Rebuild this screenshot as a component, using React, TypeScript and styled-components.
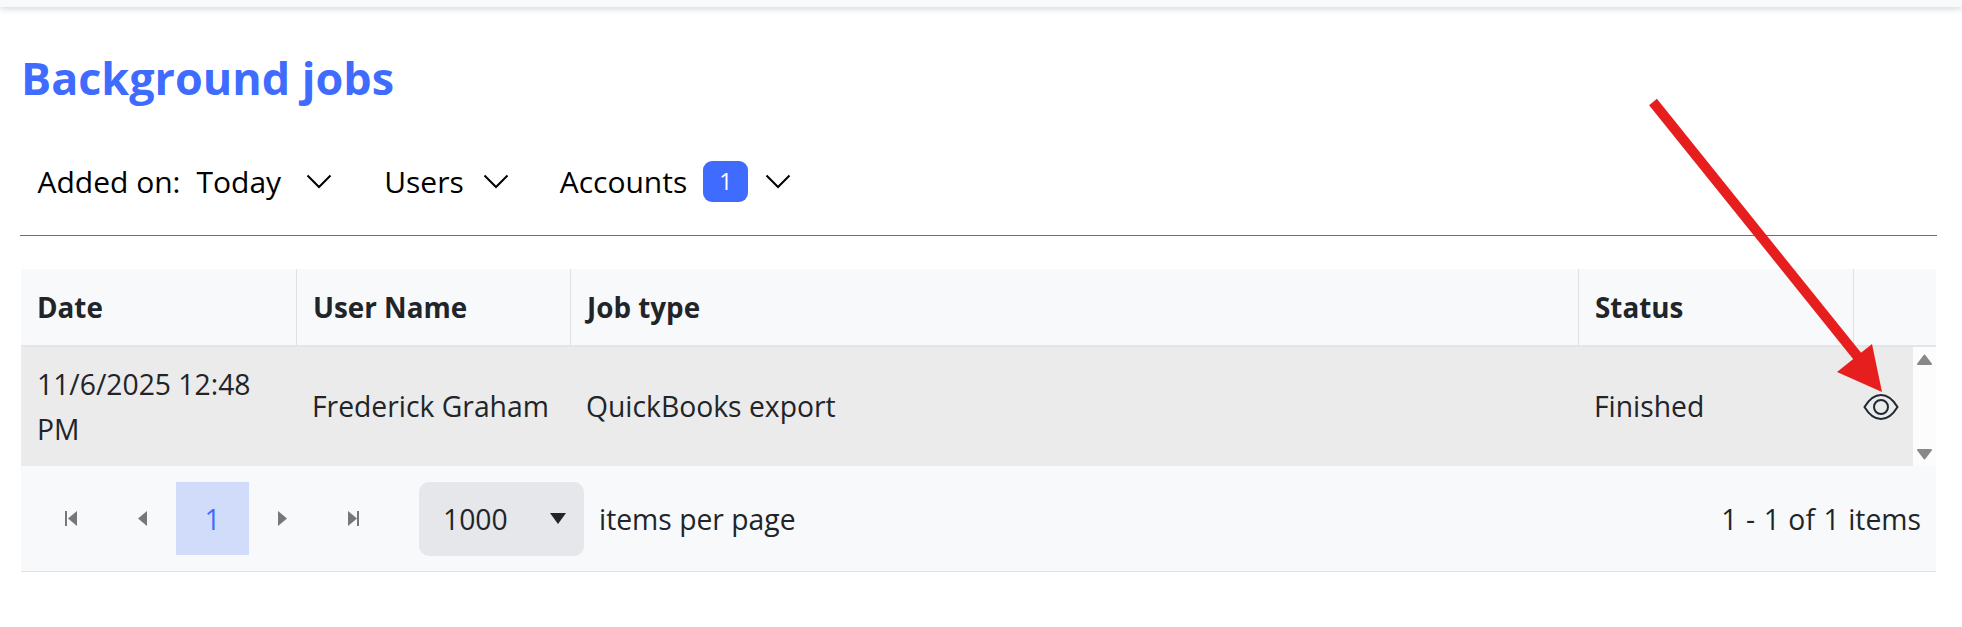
import React from 'react';
import styled, {createGlobalStyle} from 'styled-components';

const GlobalStyle = createGlobalStyle`
    html, body {
        margin: 0;
        padding: 0;
        background: #fff;
        font-family: "Open Sans", "Noto Sans", sans-serif;
        color: #212529;
    }
    * { box-sizing: border-box; }
`

const Page = styled.div`
    position: relative;
    width: 1962px;
    height: 627px;
    overflow: hidden;
`

const TopBar = styled.div`
    height: 7px;
    background: #f8f9fa;
    box-shadow: 0 2px 6px rgba(0,0,0,0.16);
`

const Content = styled.div`
    padding: 0 25px 0 20px;
`

const Title = styled.h1`
    margin: 0;
    padding: 41px 0 0 1px;
    height: 111px;
    color: #3f6cff;
    font-size: 44.9px;
    line-height: 60px;
    font-weight: 700;
`

const FilterBar = styled.div`
    display: flex;
    align-items: center;
    height: 118px;
    padding: 9px 0 0 17.5px;
    border-bottom: 1px solid #3f6cff;
    font-size: 30px;
    color: #000;
`

const Filter = styled.div<{ $gap: number; $end: number }>`
    display: flex;
    align-items: center;
    margin-right: ${p => p.$end}px;
    svg {
        margin-left: ${p => p.$gap}px;
    }
`

const FilterValue = styled.span`
    margin-left: 16px;
`

const Badge = styled.span`
    display: flex;
    align-items: center;
    justify-content: center;
    width: 45px;
    height: 41px;
    margin-left: 16px;
    border-radius: 9px;
    background: #3f6cff;
    color: #fff;
    font-size: 23px;
`

const Grid = styled.div`
    margin: 33px 1px 0;
    background: #f8f9fb;
    border-bottom: 1px solid #dee2e6;
`

const Columns = styled.div`
    display: grid;
    grid-template-columns: 275px 274px 1008px 275px 1fr;
`

const HeaderRow = styled(Columns)`
    height: 78px;
    border-bottom: 2px solid #e3e5e8;
`

const HeaderCell = styled.div`
    display: flex;
    align-items: center;
    padding-left: 16px;
    border-left: 1px solid #dee2e6;
    font-size: 27.8px;
    font-weight: 700;
    &:first-child { border-left: none; }
`

const BodyWrap = styled.div`
    display: flex;
    height: 119px;
`

const BodyRow = styled(Columns)`
    flex: 1;
    background: #ebebeb;
`

const BodyCell = styled.div`
    display: flex;
    align-items: center;
    padding-left: 16px;
    padding-right: 16px;
    font-size: 28.3px;
    line-height: 45px;
`

const ActionCell = styled.div`
    display: flex;
    align-items: center;
    padding-left: 10px;
`

const Scrollbar = styled.div`
    display: flex;
    flex-direction: column;
    align-items: center;
    justify-content: space-between;
    width: 23px;
    padding: 7px 0 6px;
    background: #fcfcfc;
`

const Pager = styled.div`
    display: flex;
    align-items: center;
    height: 105px;
    padding: 0 15px;
    font-size: 28.3px;
`

const PageBtn = styled.div<{ $active?: boolean }>`
    display: flex;
    align-items: center;
    justify-content: center;
    width: ${p => p.$active ? 73 : 70}px;
    height: 73px;
    background: ${p => p.$active ? '#d1dcfb' : 'transparent'};
    color: #3f6cff;
`

const SizeSelect = styled.div`
    display: flex;
    align-items: center;
    justify-content: space-between;
    width: 165px;
    height: 74px;
    margin-left: 30px;
    padding: 0 18px 0 24px;
    border-radius: 10px;
    background: #e5e7ea;
`

const PerPage = styled.span`
    margin-left: 15px;
`

const Total = styled.span`
    margin-left: auto;
    word-spacing: 1.2px;
`

const ArrowLayer = styled.svg`
    position: absolute;
    left: 0;
    top: 0;
    pointer-events: none;
`

const Chevron = () => (
    <svg width="26" height="15" viewBox="0 0 26 15" fill="none" stroke="#000" strokeWidth="2">
        <path d="M1.500 1.500L13 13L24.500 1.500" />
    </svg>
)

const Step: React.FC<{ dir: 'left' | 'right'; bar?: boolean }> = ({ dir, bar }) => (
    <svg width="16" height="15" viewBox="0 0 16 15" fill="#777">
        {dir === 'left'
            ? <path d="M14 0v15L5 7.500z" />
            : <path d="M2 0v15l9-7.500z" />}
        {bar && <rect x={dir === 'left' ? 2 : 11} y="0" width="2" height="15" />}
    </svg>
)

const Eye = () => (
    <svg width="36" height="28" viewBox="0 0 36 28" fill="none" stroke="#1f2933" strokeWidth="2">
        <path d="M1.500 14C6 6.500 11.500 2 18 2s12 4.500 16.500 12C30 21.500 24.500 26 18 26S6 21.500 1.500 14z" />
        <circle cx="18" cy="14" r="7" />
    </svg>
)

const ScrollUp = () => (
    <svg width="15" height="11" viewBox="0 0 15 11" fill="#888" stroke="#888" strokeWidth="2" strokeLinejoin="round">
        <path d="M7.500 1.500L14 10H1z" />
    </svg>
)

const ScrollDown = () => (
    <svg width="15" height="11" viewBox="0 0 15 11" fill="#888" stroke="#888" strokeWidth="2" strokeLinejoin="round">
        <path d="M7.500 9.500L14 1H1z" />
    </svg>
)

const App: React.FC = () => {
    return (
        <Page>
            <GlobalStyle />
            <TopBar />
            <Content>
                <Title>Background jobs</Title>
                <FilterBar>
                    <Filter $gap={25} $end={52}>Added on:<FilterValue>Today</FilterValue><Chevron /></Filter>
                    <Filter $gap={19} $end={51}>Users<Chevron /></Filter>
                    <Filter $gap={17} $end={0}>Accounts<Badge>1</Badge><Chevron /></Filter>
                </FilterBar>
                <Grid>
                    <HeaderRow>
                        <HeaderCell>Date</HeaderCell>
                        <HeaderCell>User Name</HeaderCell>
                        <HeaderCell>Job type</HeaderCell>
                        <HeaderCell>Status</HeaderCell>
                        <HeaderCell />
                    </HeaderRow>
                    <BodyWrap>
                        <BodyRow>
                            <BodyCell>11/6/2025 12:48 PM</BodyCell>
                            <BodyCell>Frederick Graham</BodyCell>
                            <BodyCell>QuickBooks export</BodyCell>
                            <BodyCell>Finished</BodyCell>
                            <ActionCell><Eye /></ActionCell>
                        </BodyRow>
                        <Scrollbar>
                            <ScrollUp />
                            <ScrollDown />
                        </Scrollbar>
                    </BodyWrap>
                    <Pager>
                        <PageBtn><Step dir="left" bar /></PageBtn>
                        <PageBtn><Step dir="left" /></PageBtn>
                        <PageBtn $active>1</PageBtn>
                        <PageBtn><Step dir="right" /></PageBtn>
                        <PageBtn><Step dir="right" bar /></PageBtn>
                        <SizeSelect>
                            1000
                            <svg width="16" height="11" viewBox="0 0 16 11" fill="#212529"><path d="M0 0h16L8 11z" /></svg>
                        </SizeSelect>
                        <PerPage>items per page</PerPage>
                        <Total>1 - 1 of 1 items</Total>
                    </Pager>
                </Grid>
            </Content>
            <ArrowLayer width="1962" height="627" viewBox="0 0 1962 627">
                <path d="M1653 102L1858 357" stroke="#e71e1e" strokeWidth="10" fill="none" />
                <path d="M1872 344L1882 392L1837 372z" fill="#e71e1e" />
            </ArrowLayer>
        </Page>
    )
}

export default App
